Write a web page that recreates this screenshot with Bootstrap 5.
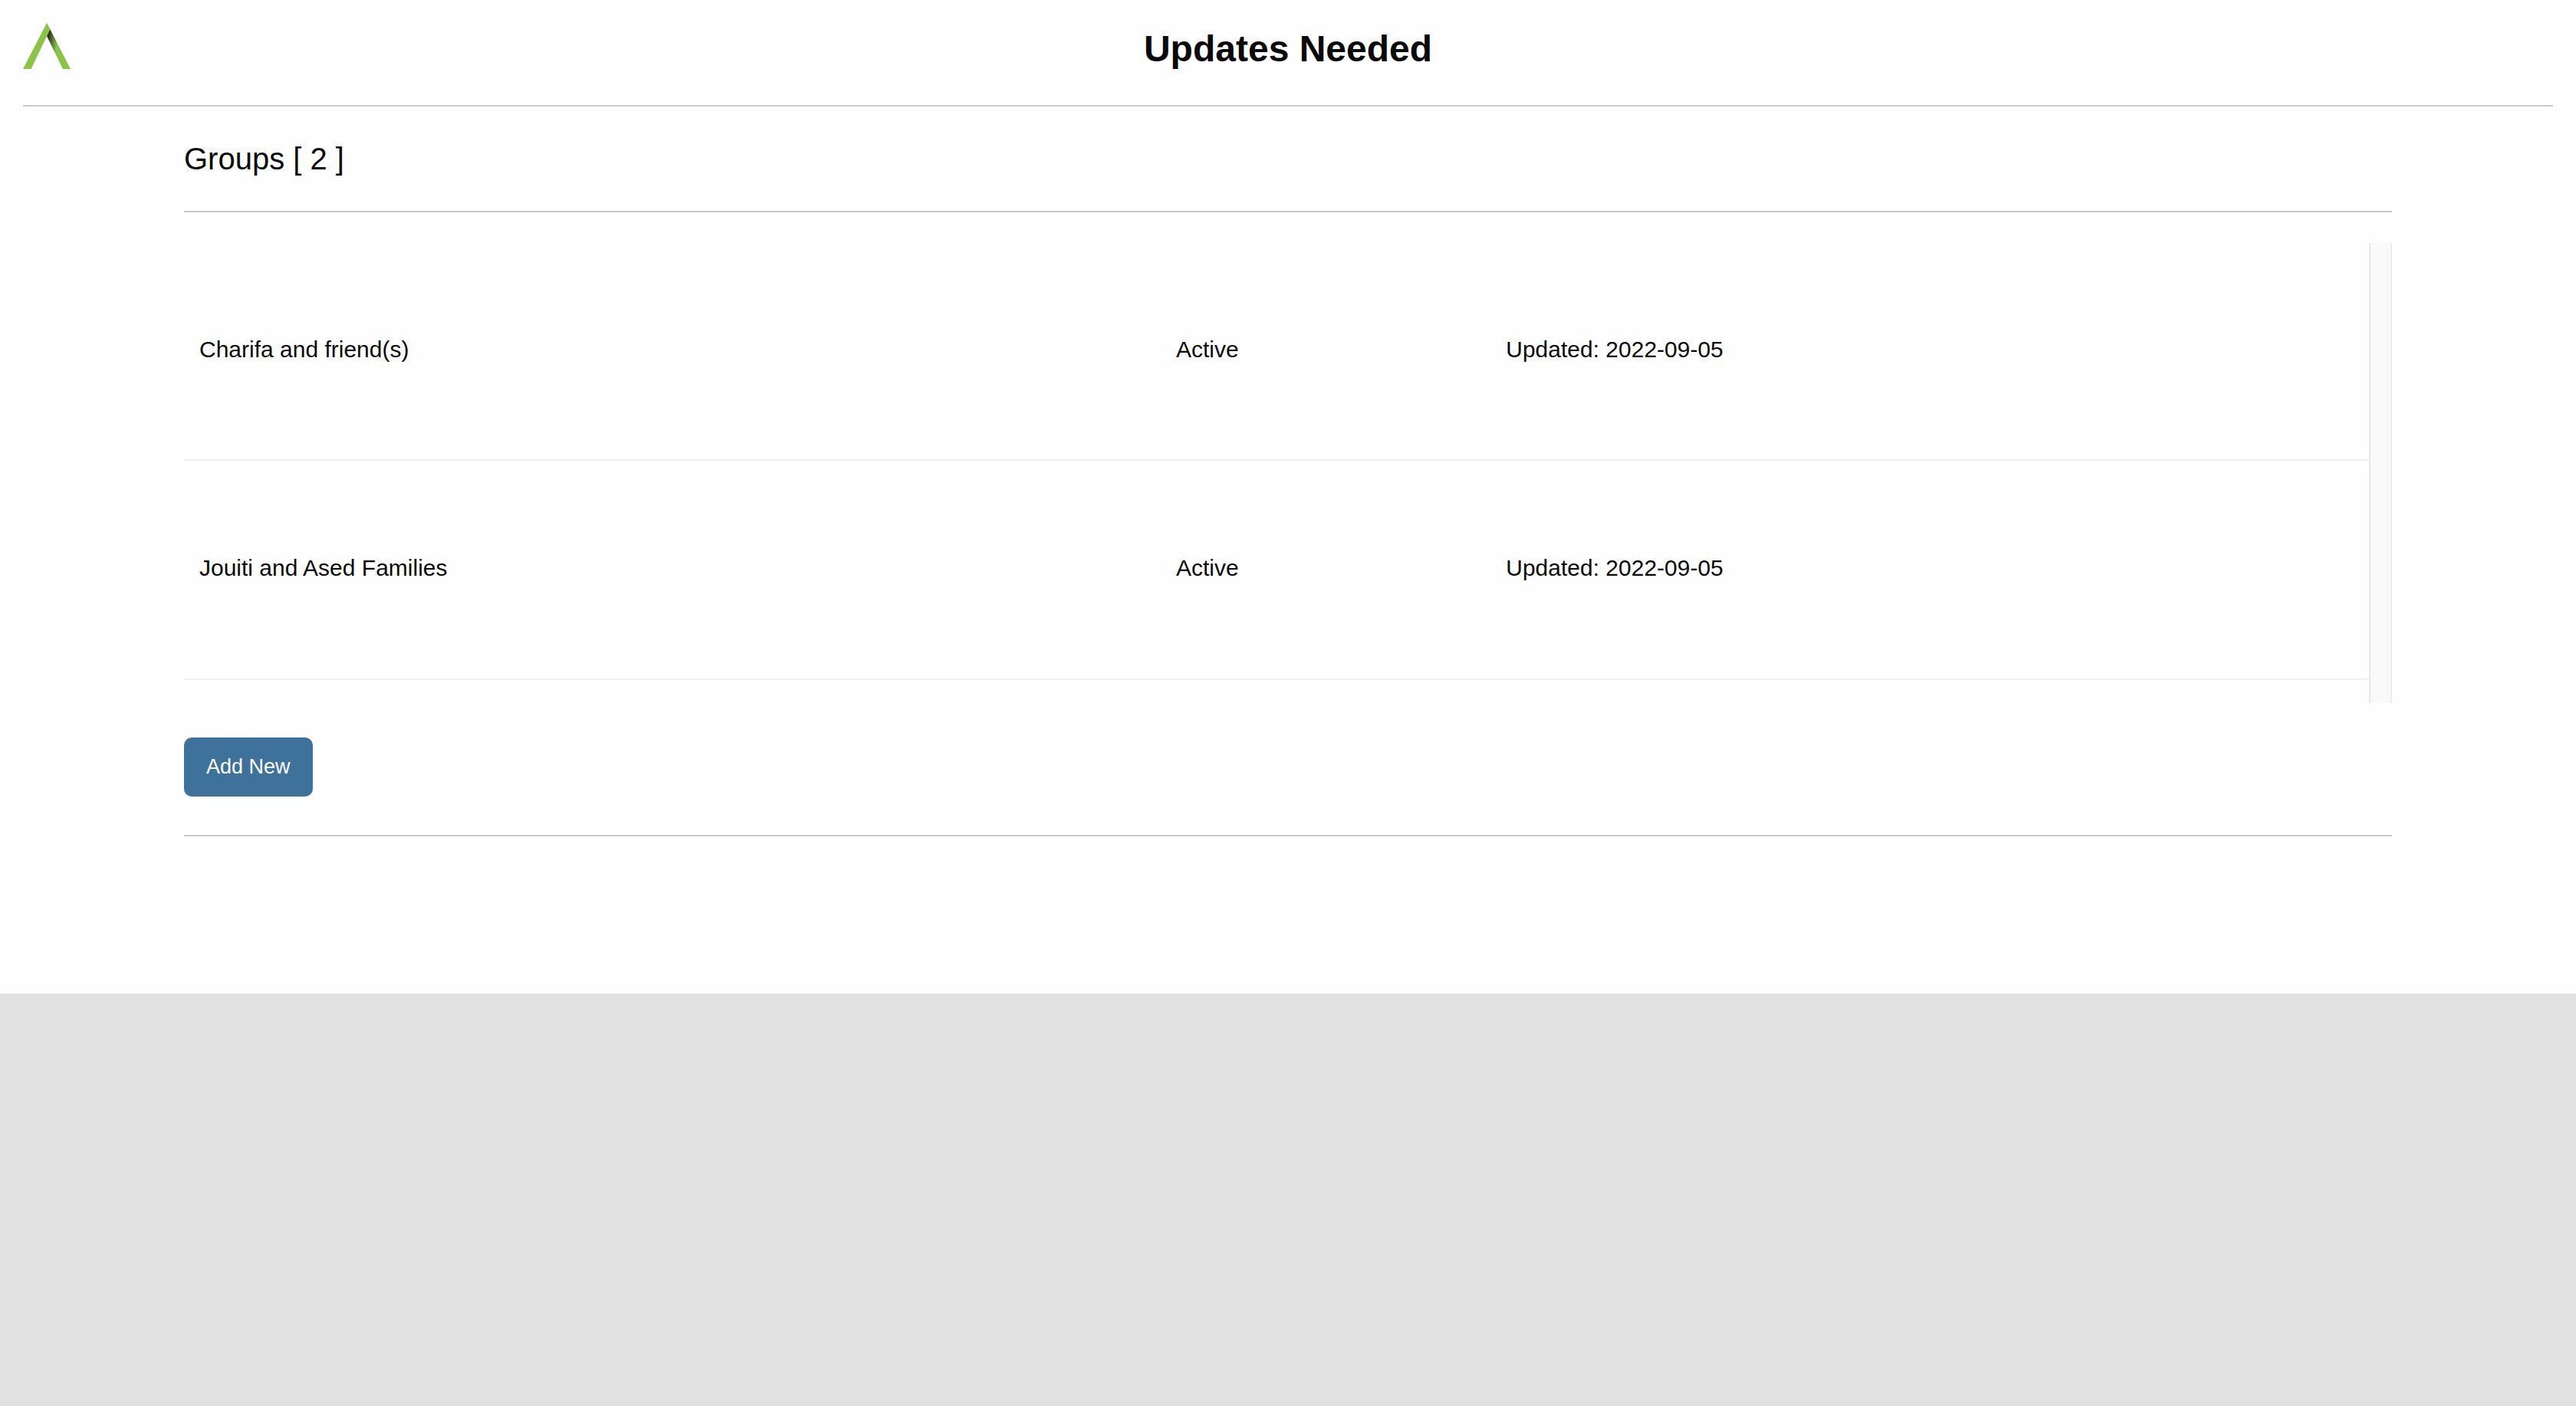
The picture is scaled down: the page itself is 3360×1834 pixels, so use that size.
<!DOCTYPE html>
<html lang="en">
<head>
<meta charset="utf-8">
<meta name="viewport" content="width=device-width, initial-scale=1">
<title>Updates Needed</title>
<link href="https://cdn.jsdelivr.net/npm/bootstrap@5.3.0/dist/css/bootstrap.min.css" rel="stylesheet">
<style>
  body { background: #e1e1e1; color: #0a0a0a; font-family: "Helvetica Neue", "Liberation Sans", Arial, sans-serif; font-size: 30px; }
  .page-sheet { background: #fefefe; padding: 30px 30px 205px; }
  .brand-side { flex: 1 1 0; }
  .brand-side svg { width: 62px; height: 60px; }
  .page-title { font-size: 48px; line-height: 67px; font-weight: 700; }
  .rule { height: 2px; margin: 40px 0; border: 0; background: #cacaca; opacity: 1; }
  .content-area { padding: 0 210px; }
  .section-title { font-size: 40px; line-height: 56px; font-weight: 300; }
  .list-box { height: 600px; }
  .list-scroll { overflow-y: auto; scrollbar-width: none; }
  .group-table { table-layout: fixed; font-weight: 300; line-height: 44px; }
  .group-table td { height: 286px; padding: 0 20px 4px; border-bottom: 2px solid #f1f1f1; }
  .group-table tr:first-child td { height: 283px; }
  .col-name { width: 44.7%; }
  .col-status { width: 15.1%; }
  .list-track { width: 30px; background: #fafafa; border-left: 2px solid #e8e8e8; border-right: 2px solid #ededed; }
  .btn-add { --bs-btn-color: #fefefe; --bs-btn-bg: #3f729b; --bs-btn-hover-color: #fefefe; --bs-btn-hover-bg: #365f82; --bs-btn-border-width: 0; --bs-btn-padding-x: 29px; --bs-btn-padding-y: 23px; --bs-btn-font-size: 27px; --bs-btn-line-height: 31px; --bs-btn-border-radius: 10px; margin: 45px 0 10px; }
</style>
</head>
<body>
<div class="page-sheet">
  <header class="d-flex align-items-start">
    <a href="#" class="brand-side d-flex" aria-label="Home">
      <svg viewBox="0 0 62 60" aria-hidden="true">
        <defs>
          <linearGradient id="fold" gradientUnits="userSpaceOnUse" x1="32" y1="16" x2="46" y2="18">
            <stop offset="0" stop-color="#1f2419"/>
            <stop offset="1" stop-color="#8bc34a"/>
          </linearGradient>
        </defs>
        <path fill="url(#fold)" d="M35 7.500L62 60H52L31 17Z"/>
        <path fill="#8bc34a" d="M31 0L35.500 8L10.500 60H0Z"/>
      </svg>
    </a>
    <h1 class="page-title text-center mb-0">Updates Needed</h1>
    <div class="brand-side"></div>
  </header>
  <hr class="rule">
  <main class="content-area">
    <h2 class="section-title mb-0">Groups [ 2 ]</h2>
    <hr class="rule">
    <div class="list-box d-flex">
      <div class="list-scroll flex-grow-1">
        <table class="group-table w-100">
          <colgroup><col class="col-name"><col class="col-status"><col></colgroup>
          <tbody>
            <tr><td>Charifa and friend(s)</td><td>Active</td><td>Updated: 2022-09-05</td></tr>
            <tr><td>Jouiti and Ased Families</td><td>Active</td><td>Updated: 2022-09-05</td></tr>
          </tbody>
        </table>
      </div>
      <div class="list-track flex-shrink-0"></div>
    </div>
    <div class="d-flex"><button type="button" class="btn btn-add">Add New</button></div>
    <hr class="rule mb-0">
  </main>
</div>
<script src="https://cdn.jsdelivr.net/npm/bootstrap@5.3.0/dist/js/bootstrap.bundle.min.js"></script>
</body>
</html>
